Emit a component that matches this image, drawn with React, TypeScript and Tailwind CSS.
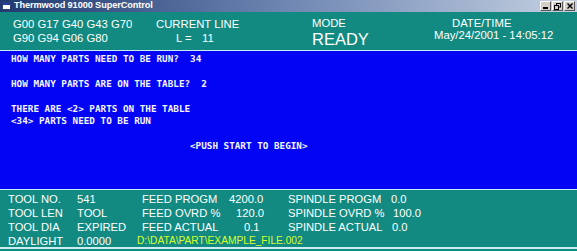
import React from "react";

const sans = { fontFamily: '"Liberation Sans", Arial, sans-serif' } as React.CSSProperties;
const mono = { fontFamily: '"DejaVu Sans Mono", "Liberation Mono", monospace' } as React.CSSProperties;

function Row({ a, b, c, cv, cvPad, d, dv, dvPad, path }: { a: string; b: string; c?: string; cv?: string; cvPad?: string; d?: string; dv?: string; dvPad?: string; path?: string }) {
  return (
    <div className="flex h-[14px] items-center leading-[14px] whitespace-nowrap">
      <div className="w-[77px] pl-[8px] shrink-0">{a}</div>
      <div className="w-[65px] shrink-0">{b}</div>
      {path ? (
        <div className="-ml-[5px] text-[10.2px] text-[#d8ff2a]">{path}</div>
      ) : (
        <>
          <div className="w-[146px] shrink-0 flex">
            <span className="w-[87px] shrink-0">{c}</span>
            <span className={cvPad}>{cv}</span>
          </div>
          <div className="flex">
            <span className="w-[102px] shrink-0">{d}</span>
            <span className={dvPad}>{dv}</span>
          </div>
        </>
      )}
    </div>
  );
}

export default function App() {
  return (
    <div className="w-[577px] h-[251px] overflow-hidden flex flex-col bg-[#128a82] text-white" style={sans}>
      {/* Title bar */}
      <div className="h-[12px] shrink-0 flex items-center bg-gradient-to-r from-[#203a70] via-[#6f87b2] to-[#c6d1e2]">
        <div className="ml-[2px] w-[9px] h-[8px] bg-white border border-[#30407a] flex flex-col">
          <div className="h-[2px] bg-[#2040a0]" />
        </div>
        <div className="ml-[3px] text-[9.2px] font-bold leading-none tracking-[-0.1px]">Thermwood 91000 SuperControl</div>
        <div className="ml-auto mr-[2px] flex gap-[1px]">
          <div className="w-[11px] h-[10px] bg-[#d4d0c8] border-t border-l border-white border-r border-b border-r-[#555] border-b-[#555] flex items-end justify-center pb-[1px]">
            <div className="w-[5px] h-[2px] bg-black" />
          </div>
          <div className="w-[11px] h-[10px] bg-[#d4d0c8] border-t border-l border-white border-r border-b border-r-[#555] border-b-[#555] flex items-center justify-center">
            <svg width="7" height="7" viewBox="0 0 7 7">
              <rect x="2.5" y="0.5" width="4" height="3.5" fill="none" stroke="black" strokeWidth="1" />
              <rect x="0.5" y="2.5" width="4" height="4" fill="#d4d0c8" stroke="black" strokeWidth="1" />
            </svg>
          </div>
          <div className="w-[11px] h-[10px] bg-[#d4d0c8] border-t border-l border-white border-r border-b border-r-[#555] border-b-[#555] flex items-center justify-center">
            <svg width="6" height="6" viewBox="0 0 6 6">
              <path d="M0.5 0.5 L5.5 5.5 M5.5 0.5 L0.5 5.5" stroke="black" strokeWidth="1.4" />
            </svg>
          </div>
        </div>
      </div>

      {/* Header */}
      <div className="h-[38px] shrink-0 flex text-[11.3px] whitespace-nowrap">
        <div className="w-[156px] pl-[13px] pt-[5px] leading-[14px] shrink-0">
          <div>G00 G17 G40 G43 G70</div>
          <div>G90 G94 G06 G80</div>
        </div>
        <div className="w-[156px] pt-[5px] leading-[14px] shrink-0">
          <div>CURRENT LINE</div>
          <div className="flex">
            <span className="ml-[20px] w-[26px]">L =</span>
            <span>11</span>
          </div>
        </div>
        <div className="w-[122px] pt-[4px] shrink-0">
          <div className="leading-[14px]">MODE</div>
          <div className="text-[16.5px] leading-[18px]">READY</div>
        </div>
        <div className="pt-[5px] leading-[12px]">
          <div className="pl-[18px]">DATE/TIME</div>
          <div>May/24/2001 - 14:05:12</div>
        </div>
      </div>

      <div className="h-[1px] shrink-0 bg-[#c8eeee]" />

      {/* Blue panel */}
      <div className="h-[138px] shrink-0 bg-[#0404f4] pt-[2px] pl-[11px] text-[9.3px] font-bold leading-[12.4px] whitespace-pre text-[#f4f4ff]" style={mono}>
        <div>HOW MANY PARTS NEED TO BE RUN?  34</div>
        <div>&nbsp;</div>
        <div>HOW MANY PARTS ARE ON THE TABLE?  2</div>
        <div>&nbsp;</div>
        <div>THERE ARE &lt;2&gt; PARTS ON THE TABLE</div>
        <div>&lt;34&gt; PARTS NEED TO BE RUN</div>
        <div>&nbsp;</div>
        <div className="pl-[179px]">&lt;PUSH START TO BEGIN&gt;</div>
      </div>

      <div className="h-[1px] shrink-0 bg-[#c8eeee]" />

      {/* Bottom panel */}
      <div className="h-[57px] shrink-0 pt-[2px] text-[11.2px]">
        <Row a="TOOL NO." b="541" c="FEED PROGM" cv="4200.0" cvPad="" d="SPINDLE PROGM" dv="0.0" dvPad="pl-[1px]" />
        <Row a="TOOL LEN" b="TOOL" c="FEED OVRD %" cv="120.0" cvPad="pl-[7px]" d="SPINDLE OVRD %" dv="100.0" dvPad="pl-[3px]" />
        <Row a="TOOL DIA" b="EXPIRED" c="FEED ACTUAL" cv="0.1" cvPad="pl-[15px]" d="SPINDLE ACTUAL" dv="0.0" dvPad="pl-[2px]" />
        <Row a="DAYLIGHT" b="0.0000" path="D:\DATA\PART\EXAMPLE_FILE.002" />
      </div>

      <div className="h-[2px] shrink-0 bg-[#c8eeee]" />
    </div>
  );
}
